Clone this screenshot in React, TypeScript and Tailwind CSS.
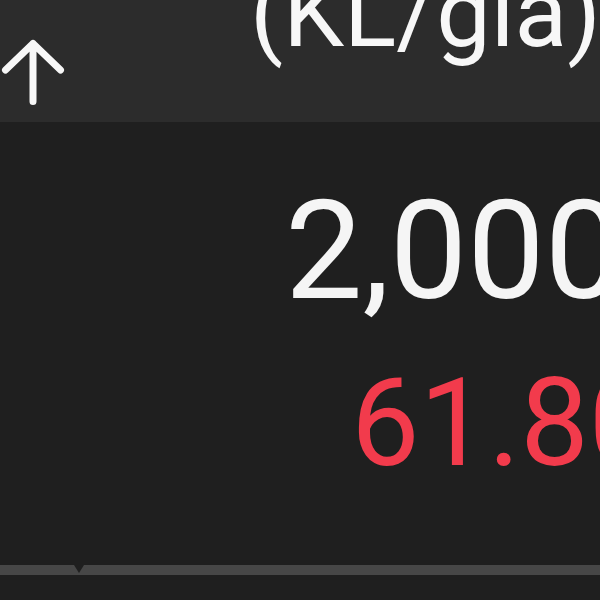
import React from "react";

export default function App() {
  return (
    <div
      className="w-[600px] h-[600px] overflow-hidden bg-[#1f1f1f] flex flex-col"
      style={{ fontFamily: "Roboto, 'Noto Sans', sans-serif" }}
    >
      <div className="h-[122px] shrink-0 bg-[#2c2c2c] flex items-start overflow-hidden">
        <svg width="70" height="122" viewBox="0 0 70 122" className="shrink-0">
          <path
            d="M5.5 70 L33 43.5 L60.5 70 M33 43.5 V101.5"
            fill="none"
            stroke="#f7f7f7"
            strokeWidth="7"
            strokeLinecap="round"
            strokeLinejoin="round"
          />
        </svg>
        <span className="ml-[180px] mt-[-35px] text-[97px] leading-none text-[#f7f7f7] whitespace-nowrap">
          (KL/gia)
        </span>
      </div>
      <div className="flex-1 flex flex-col">
        <span className="mt-[60px] pl-[285px] text-[138px] leading-none text-[#f5f5f5] whitespace-nowrap">
          2,000
        </span>
        <span className="mt-[43px] pl-[351px] text-[122px] leading-none text-[#f23b4c] whitespace-nowrap">
          61.80
        </span>
        <div className="mt-auto relative h-[10px] bg-[#474747]">
          <div className="absolute left-[74px] top-0 w-0 h-0 border-l-[5px] border-r-[5px] border-t-[8px] border-l-transparent border-r-transparent border-t-[#1f1f1f]" />
        </div>
        <div className="h-[25px] shrink-0" />
      </div>
    </div>
  );
}
